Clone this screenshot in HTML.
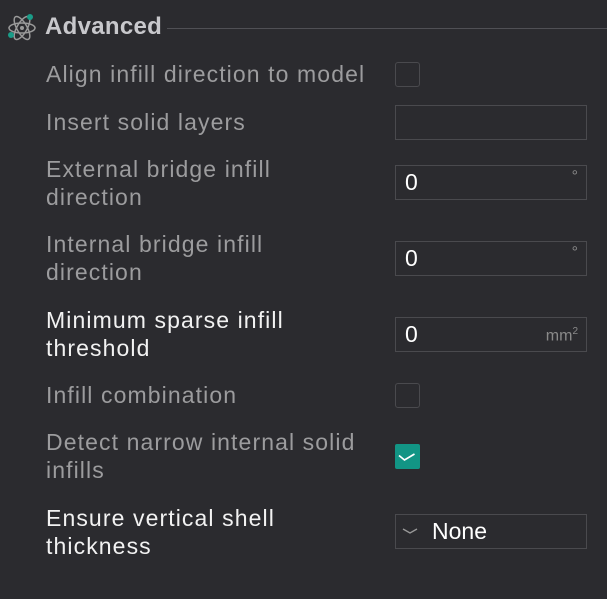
<html><head><style>
body{margin:0;width:607px;height:599px;background:#2b2b2f;font-family:"Liberation Sans",sans-serif;position:relative;overflow:hidden}
.t{position:absolute;left:46px;font-size:23px;letter-spacing:1.1px;line-height:28px;color:#9c9c9e}
.w{color:#f2f2f2}
.box{position:absolute;left:395px;width:190px;height:33px;border:1px solid #4a4a4e;box-sizing:content-box}
.box span{position:absolute;left:9px;top:3px;font-size:23px;color:#fff}
.u{position:absolute;right:8px;top:6px;font-size:16px;color:#8a8a8a;font-style:normal}
.cb{position:absolute;left:395px;width:23px;height:23px;border:1px solid #4a4a4e;border-radius:3px}
</style></head><body>
<svg style="position:absolute;left:7px;top:13px" width="30" height="30" viewBox="0 0 30 30"><g fill="none" stroke="#9a9a9a" stroke-width="1.5"><ellipse cx="15" cy="15" rx="13" ry="5"/><ellipse cx="15" cy="15" rx="13" ry="5" transform="rotate(60 15 15)"/><ellipse cx="15" cy="15" rx="13" ry="5" transform="rotate(-60 15 15)"/></g><circle cx="15" cy="15" r="2" fill="#9a9a9a"/><circle cx="23" cy="4" r="3" fill="#1a9c88"/><circle cx="4" cy="22" r="3" fill="#1a9c88"/></svg>
<div style="position:absolute;left:45px;top:13px;font-size:24px;letter-spacing:0.3px;font-weight:bold;color:#c8c8cc">Advanced</div>
<div style="position:absolute;left:167px;right:0;top:28px;height:1px;background:#505055"></div>
<div class="t" style="top:60px">Align infill direction to model</div>
<div class="cb" style="top:62px"></div>
<div class="t" style="top:108px">Insert solid layers</div>
<div class="box" style="top:105px"></div>
<div class="t" style="top:155px">External bridge infill<br>direction</div>
<div class="box" style="top:165px"><span>0</span><i class="u" style="top:2px">°</i></div>
<div class="t" style="top:230px">Internal bridge infill<br>direction</div>
<div class="box" style="top:241px"><span>0</span><i class="u" style="top:2px">°</i></div>
<div class="t w" style="top:306px">Minimum sparse infill<br>threshold</div>
<div class="box" style="top:317px"><span>0</span><i class="u" style="top:8px">mm<sup style="font-size:10px">2</sup></i></div>
<div class="t" style="top:381px">Infill combination</div>
<div class="cb" style="top:383px"></div>
<div class="t" style="top:428px">Detect narrow internal solid<br>infills</div>
<div style="position:absolute;left:395px;top:444px;width:25px;height:25px;background:#129585;border-radius:2px"><svg style="display:block" width="25" height="25" viewBox="0 0 25 25"><path d="M4 11.5l5.5 4.5 10-6" fill="none" stroke="#fff" stroke-width="1.7"/></svg></div>
<div class="t w" style="top:504px">Ensure vertical shell<br>thickness</div>
<div class="box" style="top:514px"><svg style="position:absolute;left:6px;top:12px" width="16" height="8"><path d="M1 2l7 4 7-4" fill="none" stroke="#999" stroke-width="1.3"/></svg><span style="left:36px">None</span></div>
</body></html>
